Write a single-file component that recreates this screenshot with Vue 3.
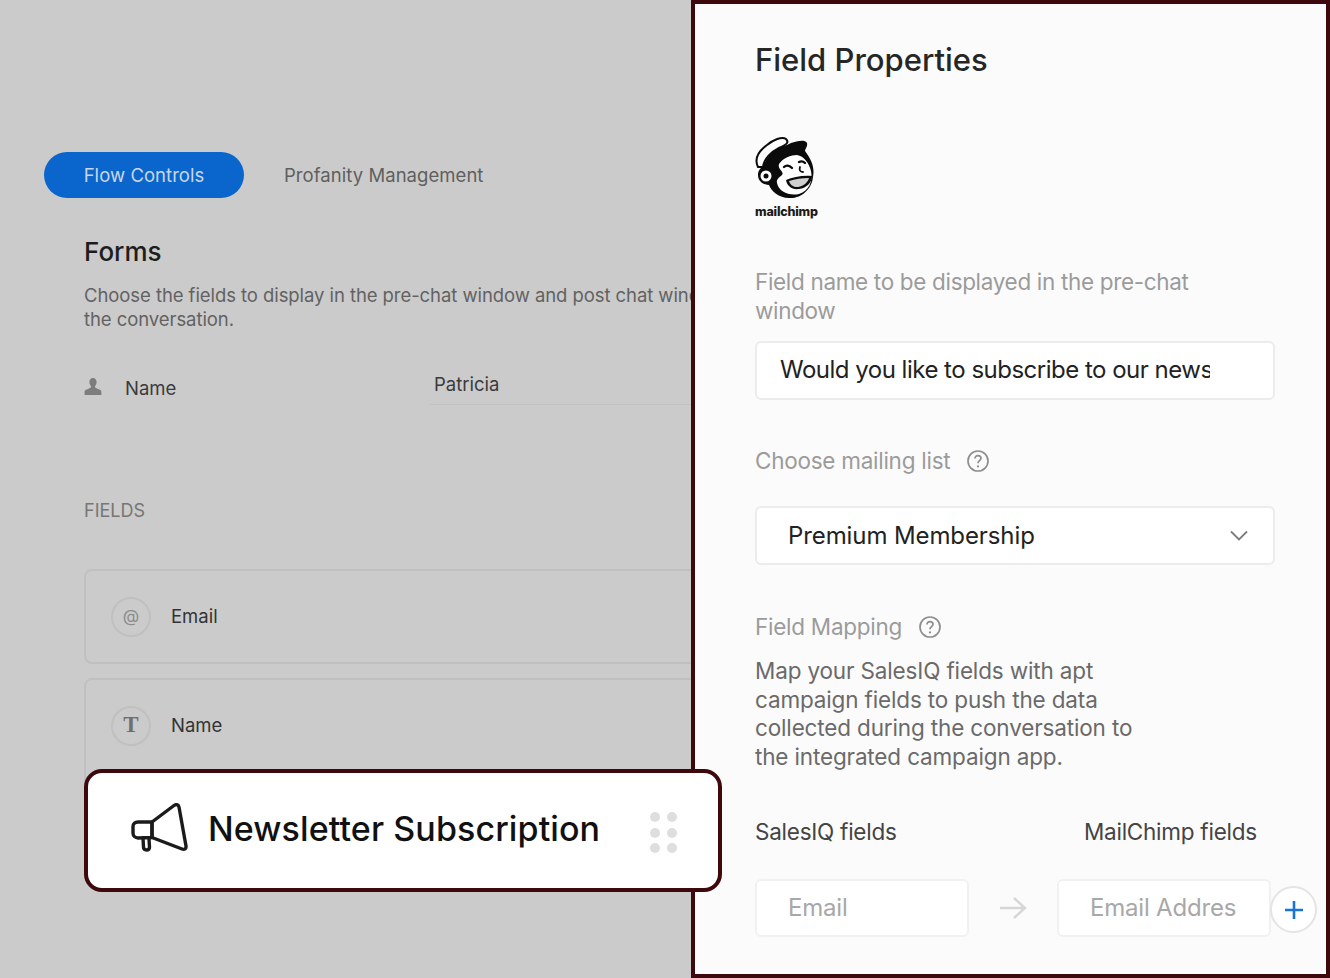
<template>
  <div class="page">
    <section class="back">
      <div class="tabs">
        <span class="tab active">Flow Controls</span>
        <span class="tab">Profanity Management</span>
      </div>
      <div class="back-body">
        <h2 class="forms-title">Forms</h2>
        <p class="forms-desc">Choose the fields to display in the pre-chat window and post chat window during<br />the conversation.</p>
        <div class="name-row">
          <span class="name-label">
            <svg class="user-icon" viewBox="0 0 20 20" width="20" height="20">
              <path d="M10 1c2.200 0 3.600 1.700 3.600 4 0 1.700-.7 3-1.500 3.900v1.300c0 .9 2.300 1.300 4.400 2.300 1.300.6 1.900 1.500 1.900 2.500V18H1.600v-3c0-1 .6-1.900 1.900-2.500 2.100-1 4.400-1.400 4.400-2.300V8.900C7.100 8 6.400 6.700 6.400 5c0-2.300 1.400-4 3.600-4z" fill="#7d7d7d" />
            </svg>
            Name
          </span>
          <span class="name-value">Patricia</span>
        </div>
        <div class="fields-label">FIELDS</div>
        <div v-for="f in fields" :key="f.label" class="field-card">
          <span class="field-badge" :class="f.cls">{{ f.glyph }}</span>
          <span class="field-name">{{ f.label }}</span>
        </div>
      </div>
    </section>

    <aside class="panel">
      <h1 class="panel-title">Field Properties</h1>
      <div class="logo">
        <svg class="chimp" viewBox="0 0 66 66" width="66" height="66">
          <path d="M8 30C12 18 22 10 32 8l4-2c6-2 14-4 16 0 1 3-2 6-2 8 6 8 10 16 8 26-1 12-12 22-24 21-10 0-18-7-20-13-6 0-11-4-11-10 0-4 2-7 5-8z" fill="#0b0b0b" />
          <path d="M3 30C-1 22 4 14 12 8 18 3 27-1 31 2c4 4-1 6-7 9-8 4-15 11-16 19z" fill="#fff" stroke="#0b0b0b" stroke-width="2" />
          <circle cx="11" cy="39" r="5.500" fill="#fff" />
          <circle cx="11" cy="39" r="2.500" fill="#0b0b0b" />
          <path d="M24 27c4-6 12-9 18-9 7 1 12 8 14 16 2 10-2 20-12 23-10 2-20-2-22-11-1-4 3-6 5-8 3-3-5-6-3-11z" fill="#fff" />
          <path d="M31 43c7-3 17-5 26-4 0 6-5 12-13 13-7 1-12-3-13-9z" fill="#0b0b0b" />
          <path d="M34 44c6-2 13-3 20-3-1 4-5 8-11 9-4 .5-8-2-9-6z" fill="#cfcfcf" />
          <path d="M29 30c2-2 5-2 8 1M44 25c2-1 4-1 6 1" fill="none" stroke="#0b0b0b" stroke-width="2.400" stroke-linecap="round" />
          <path d="M45 30c-1 3 0 5 3 5" fill="none" stroke="#0b0b0b" stroke-width="1.800" stroke-linecap="round" />
        </svg>
        <span class="logo-word">mailchimp</span>
      </div>

      <label class="muted-label display-label">Field name to be displayed in the pre-chat window</label>
      <div class="box text-box"><span class="clip-text">Would you like to subscribe to our newsletter?</span></div>

      <div class="muted-label help-row mailing">
        Choose mailing list
        <svg class="help" viewBox="0 0 24 24" width="24" height="24">
          <circle cx="12" cy="12" r="10" fill="none" stroke="#8e8e8e" stroke-width="1.700" />
          <path d="M9 9.500c0-1.800 1.300-2.900 3-2.900s3 1.100 3 2.700c0 2.400-3 2.400-3 4.900" fill="none" stroke="#8e8e8e" stroke-width="1.700" />
          <circle cx="12" cy="17.400" r="1.100" fill="#8e8e8e" />
        </svg>
      </div>
      <div class="box select-box">
        <span>Premium Membership</span>
        <svg viewBox="0 0 18 11" width="18" height="11">
          <path d="M1 1.500l8 8 8-8" fill="none" stroke="#7c7c7c" stroke-width="1.800" />
        </svg>
      </div>

      <div class="muted-label help-row mapping">
        Field Mapping
        <svg class="help" viewBox="0 0 24 24" width="24" height="24">
          <circle cx="12" cy="12" r="10" fill="none" stroke="#8e8e8e" stroke-width="1.700" />
          <path d="M9 9.500c0-1.800 1.300-2.900 3-2.900s3 1.100 3 2.700c0 2.400-3 2.400-3 4.900" fill="none" stroke="#8e8e8e" stroke-width="1.700" />
          <circle cx="12" cy="17.400" r="1.100" fill="#8e8e8e" />
        </svg>
      </div>
      <p class="mapping-desc">Map your SalesIQ fields with apt<br />campaign fields to push the data<br />collected during the conversation to<br />the integrated campaign app.</p>

      <div class="map-heads">
        <span>SalesIQ fields</span>
        <span class="head-right">MailChimp fields</span>
      </div>
      <div class="map-row">
        <div class="map-box">Email</div>
        <svg class="arrow" viewBox="0 0 28 24" width="28" height="24">
          <path d="M1 12h25M15 2l11 10-11 10" fill="none" stroke="#d6d6d6" stroke-width="2.400" />
        </svg>
        <div class="map-box"><span class="clip-text">Email Address</span></div>
        <span class="add">
          <svg viewBox="0 0 20 20" width="20" height="20">
            <path d="M10 1v18M1 10h18" fill="none" stroke="#1a73d9" stroke-width="2.600" />
          </svg>
        </span>
      </div>
    </aside>

    <div class="drag-card">
      <svg class="horn" viewBox="0 0 58 54" width="58" height="54">
        <g fill="none" stroke="#1b1b1b" stroke-width="3.400" stroke-linejoin="round" stroke-linecap="round">
          <path d="M21 19L43 2.500c2-1.500 4.500-1 5 1.500l7 39c.4 2.700-1.500 4-4 3L21 34.500z" />
          <path d="M21 19H7c-3 0-5 2-5 4.500v6.500c0 3 2.500 5 5 5l14-.5z" />
          <path d="M12 35l.5 9c.1 4 6 4 6 0l-.5-8" />
        </g>
      </svg>
      <span class="drag-title">Newsletter Subscription</span>
      <span class="grip">
        <i v-for="n in 6" :key="n"></i>
      </span>
    </div>
  </div>
</template>

<script setup>
const fields = [
  { label: 'Email', glyph: '@', cls: 'at' },
  { label: 'Name', glyph: 'T', cls: 'serif' },
];
</script>

<style>
html,
body {
  margin: 0;
  background: #cbcbcb;
}
</style>

<style scoped>
.page {
  position: relative;
  width: 1330px;
  height: 978px;
  display: flex;
  overflow: hidden;
  background: #cbcbcb;
  font-family: Inter, "Liberation Sans", sans-serif;
  color: #222;
}
.back {
  width: 691px;
  flex: none;
  overflow: hidden;
  padding: 152px 0 0 44px;
  box-sizing: border-box;
}
.tabs {
  display: flex;
  align-items: center;
  gap: 40px;
  white-space: nowrap;
}
.tab {
  font-size: 18.500px;
  color: #5f5f5f;
  letter-spacing: 0.05px;
}
.tab.active {
  width: 200px;
  height: 46px;
  border-radius: 23px;
  background: #0a66cc;
  color: #c9d6e6;
  display: flex;
  align-items: center;
  justify-content: center;
}
.back-body {
  padding-left: 40px;
  width: 800px;
}
.forms-title {
  margin: 37px 0 0;
  font-size: 26px;
  line-height: 34px;
  font-weight: 500;
  color: #1d1d1d;
}
.forms-desc {
  margin: 14px 0 0;
  font-size: 18.500px;
  line-height: 24px;
  letter-spacing: -0.07px;
  color: #626262;
  white-space: nowrap;
}
.name-row {
  display: flex;
  margin-top: 40px;
  font-size: 18.500px;
  color: #3a3a3a;
}
.name-label {
  width: 346px;
  display: flex;
  align-items: center;
  gap: 22px;
  padding-top: 3px;
  height: 28px;
}
.user-icon {
  margin-top: -2px;
  margin-left: -1px;
}
.name-value {
  flex: 1;
  padding: 0 0 7px 4px;
  border-bottom: 1px solid #c2c2c2;
  line-height: 26px;
  height: 26px;
}
.fields-label {
  margin-top: 94px;
  font-size: 18px;
  line-height: 24px;
  color: #767676;
}
.field-card {
  display: flex;
  align-items: center;
  gap: 20px;
  height: 91px;
  margin-top: 46px;
  padding-left: 25px;
  border: 2px solid #c0c0c0;
  border-radius: 8px;
}
.field-card + .field-card {
  margin-top: 14px;
  height: 120px;
  align-items: flex-start;
  padding-top: 26px;
  box-sizing: border-box;
}
.field-badge {
  box-sizing: border-box;
  width: 40px;
  height: 40px;
  border: 2px solid #c0c0c0;
  border-radius: 50%;
  display: flex;
  align-items: center;
  justify-content: center;
  color: #8b8b8b;
  font-size: 17px;
  padding-bottom: 2px;
}
.field-badge.serif {
  font-family: "Liberation Serif", serif;
  font-weight: 700;
  font-size: 23px;
  color: #6f6f6f;
}
.field-name {
  font-size: 18.500px;
  line-height: 38px;
  color: #333;
  padding-bottom: 2px;
}
.panel {
  flex: 1;
  box-sizing: border-box;
  border: 4px solid #3d090d;
  background: #fbfbfb;
  padding: 0 0 0 60px;
  height: 978px;
  color: #222;
}
.panel-title {
  margin: 36px 0 0;
  font-size: 31px;
  line-height: 40px;
  font-weight: 500;
  color: #262626;
}
.logo {
  margin-top: 57px;
  width: 66px;
  height: 82px;
  display: flex;
  flex-direction: column;
}
.chimp {
  overflow: visible;
}
.logo-word {
  font-size: 12.500px;
  font-weight: 800;
  line-height: 14px;
  margin-top: 2px;
  letter-spacing: -0.2px;
  color: #1a1a1a;
}
.muted-label {
  font-size: 22.500px;
  line-height: 28.500px;
  letter-spacing: -0.26px;
  color: #9b9b9b;
}
.display-label {
  display: block;
  margin-top: 49px;
  width: 480px;
  letter-spacing: -0.33px;
}
.box {
  box-sizing: border-box;
  width: 520px;
  height: 59px;
  background: #fff;
  border: 2px solid #ececec;
  border-radius: 6px;
  display: flex;
  align-items: center;
  font-size: 24px;
}
.text-box {
  margin-top: 16px;
  padding: 0 63px 2px 23px;
  letter-spacing: -0.5px;
}
.clip-text {
  display: block;
  overflow: hidden;
  white-space: nowrap;
}
.help-row {
  display: flex;
  align-items: center;
  gap: 16px;
}
.mailing {
  margin-top: 47px;
}
.select-box {
  margin-top: 30px;
  padding: 0 25px 0 31px;
  justify-content: space-between;
  letter-spacing: -0.1px;
}
.mapping {
  margin-top: 48px;
}
.mapping-desc {
  margin: 16px 0 0;
  font-size: 22.500px;
  line-height: 28.500px;
  letter-spacing: -0.15px;
  color: #6a6a6a;
  white-space: nowrap;
}
.map-heads {
  display: flex;
  margin-top: 46px;
  font-size: 22.500px;
  line-height: 30px;
  letter-spacing: -0.25px;
  color: #444;
}
.map-heads span:first-child {
  width: 329px;
}
.map-row {
  display: flex;
  align-items: center;
  margin-top: 32px;
  position: relative;
}
.map-box {
  box-sizing: border-box;
  width: 214px;
  height: 58px;
  background: #fff;
  border: 2px solid #f1f1f1;
  border-radius: 6px;
  display: flex;
  align-items: center;
  padding: 0 33px 2px 31px;
  font-size: 24px;
  letter-spacing: -0.2px;
  color: #a8a8a8;
}
.arrow {
  margin: 0 30px;
}
.add {
  box-sizing: border-box;
  width: 47px;
  height: 47px;
  margin-left: -1px;
  margin-top: 3px;
  border: 2px solid #e4e4e4;
  border-radius: 50%;
  background: #fff;
  display: flex;
  align-items: center;
  justify-content: center;
  flex: none;
}
.drag-card {
  position: absolute;
  left: 84px;
  top: 769px;
  box-sizing: border-box;
  width: 638px;
  height: 123px;
  background: #fff;
  border: 4px solid #3d090d;
  border-radius: 18px;
  display: flex;
  align-items: center;
  padding-left: 43px;
}
.horn {
  flex: none;
  margin-right: 19px;
  margin-top: -2px;
}
.drag-title {
  font-size: 34px;
  font-weight: 500;
  color: #111;
  letter-spacing: 0.1px;
  white-space: nowrap;
  flex: 1;
  padding-bottom: 4px;
}
.grip {
  display: grid;
  grid-template-columns: 10px 10px;
  gap: 5.500px 7px;
  margin-right: 41px;
  margin-top: 4px;
}
.grip i {
  width: 10px;
  height: 10px;
  border-radius: 50%;
  background: #dedede;
}
</style>
